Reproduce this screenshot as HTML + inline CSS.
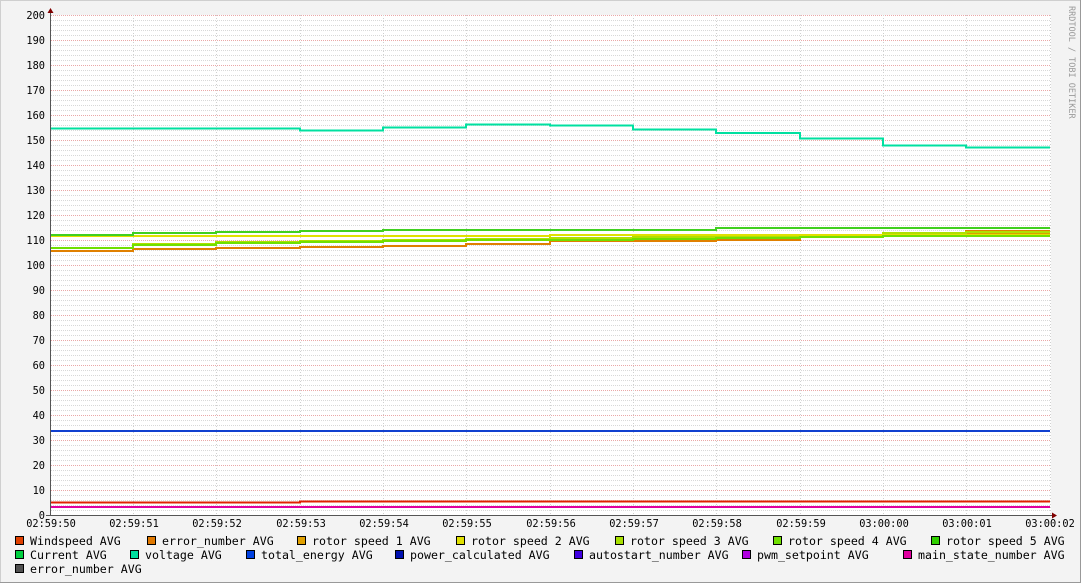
<!DOCTYPE html><html><head><style>body{margin:0;background:#f3f3f3}svg{display:block}text{font-family:"DejaVu Sans Mono","Liberation Mono",monospace}</style></head><body>
<svg width="1081" height="583" xmlns="http://www.w3.org/2000/svg">
<defs>
<pattern id="mn" x="51" y="15" width="2" height="5" patternUnits="userSpaceOnUse"><rect width="1" height="1" fill="#d8d8d8"/></pattern>
<pattern id="mj" x="51" y="15" width="2" height="25" patternUnits="userSpaceOnUse"><rect width="1" height="1" fill="#eaa8a8"/></pattern>
</defs>
<rect width="1081" height="583" fill="#f3f3f3"/>
<rect x="0.5" y="0.5" width="1080" height="582" fill="none" stroke="#cfcfcf"/>
<line x1="0" y1="582.5" x2="1081" y2="582.5" stroke="#999"/><line x1="1080.5" y1="0" x2="1080.5" y2="583" stroke="#999"/>
<rect x="51" y="15" width="1000" height="500" fill="#fff"/>
<rect x="51" y="15" width="1000" height="500" fill="url(#mn)"/>
<rect x="51" y="15" width="1000" height="500" fill="url(#mj)"/>
<g stroke="#d0d0d0" stroke-dasharray="1,2">
<line x1="133.5" y1="15" x2="133.5" y2="515"/><line x1="216.5" y1="15" x2="216.5" y2="515"/><line x1="300.5" y1="15" x2="300.5" y2="515"/><line x1="383.5" y1="15" x2="383.5" y2="515"/><line x1="466.5" y1="15" x2="466.5" y2="515"/><line x1="550.5" y1="15" x2="550.5" y2="515"/><line x1="633.5" y1="15" x2="633.5" y2="515"/><line x1="716.5" y1="15" x2="716.5" y2="515"/><line x1="800.5" y1="15" x2="800.5" y2="515"/><line x1="883.5" y1="15" x2="883.5" y2="515"/><line x1="966.5" y1="15" x2="966.5" y2="515"/><line x1="1050.5" y1="15" x2="1050.5" y2="515"/>
</g>
<g fill="none" stroke-width="2">
<path stroke="#00e0a0" d="M51 128.5H300V130.5H383V127.5H466V124.5H550V125.5H633V129.5H716V133H800V138.5H883V145.5H966V147.5H1050"/>
<path stroke="#d9a000" d="M51 251H133V249H216V248H300V247H383V246H466V244H550V241H633V240H716V239H800V236H883V234H966V233H1050"/>
<path stroke="#e08000" d="M51 251H133V249H216V248H300V247H383V246H466V244H550V241H633V241H716V240H800V236H883V234H966V231H1050"/>
<path stroke="#b0e000" d="M51 248H133V244H216V242H300V241H383V240H466V239H550V238H633V237H716V236H800V235H883V233H966V232H1050"/>
<path stroke="#e0e000" d="M51 236H550V235H1050"/>
<path stroke="#70e000" d="M51 248H133V245H216V243H300V242H383V241H466V240H550V240H633V239H716V238H800V237H883V236H966V236H1050"/>
<path stroke="#40d020" d="M51 235H133V233H216V232H300V231H383V230H716V228H1050"/>
<path stroke="#1040d0" d="M51 431H1050"/>
<path stroke="#e02000" d="M51 502.5H300V501.5H1050"/>
<path stroke="#e000a0" d="M51 507H1050"/>
</g>
<line x1="50.5" y1="10" x2="50.5" y2="516" stroke="#555"/>
<line x1="46" y1="515.5" x2="1054" y2="515.5" stroke="#555"/>
<path d="M47.5 13L50.5 8L53.5 13Z M1052 512.5L1057 515.5L1052 518.5Z" fill="#800000"/>
<g font-size="10.3" fill="#000" text-anchor="end">
<text x="45" y="519">0</text><text x="45" y="494">10</text><text x="45" y="469">20</text><text x="45" y="444">30</text><text x="45" y="419">40</text><text x="45" y="394">50</text><text x="45" y="369">60</text><text x="45" y="344">70</text><text x="45" y="319">80</text><text x="45" y="294">90</text><text x="45" y="269">100</text><text x="45" y="244">110</text><text x="45" y="219">120</text><text x="45" y="194">130</text><text x="45" y="169">140</text><text x="45" y="144">150</text><text x="45" y="119">160</text><text x="45" y="94">170</text><text x="45" y="69">180</text><text x="45" y="44">190</text><text x="45" y="19">200</text>
</g>
<g font-size="10.3" fill="#000" text-anchor="middle">
<text x="51" y="527">02:59:50</text><text x="134" y="527">02:59:51</text><text x="217" y="527">02:59:52</text><text x="301" y="527">02:59:53</text><text x="384" y="527">02:59:54</text><text x="467" y="527">02:59:55</text><text x="551" y="527">02:59:56</text><text x="634" y="527">02:59:57</text><text x="717" y="527">02:59:58</text><text x="801" y="527">02:59:59</text><text x="884" y="527">03:00:00</text><text x="967" y="527">03:00:01</text><text x="1050" y="527">03:00:02</text>
</g>
<text transform="translate(1069,6) rotate(90)" font-size="8.5" fill="#999">RRDTOOL / TOBI OETIKER</text>
<g font-size="11.6" fill="#000" stroke-width="1" stroke="#000">
<rect x="15.5" y="536.5" width="8" height="8" fill="#e04000"/><text stroke="none" x="30" y="545">Windspeed AVG</text>
<rect x="147.5" y="536.5" width="8" height="8" fill="#e07800"/><text stroke="none" x="162" y="545">error_number AVG</text>
<rect x="297.5" y="536.5" width="8" height="8" fill="#e0a000"/><text stroke="none" x="312" y="545">rotor speed 1 AVG</text>
<rect x="456.5" y="536.5" width="8" height="8" fill="#e0e000"/><text stroke="none" x="471" y="545">rotor speed 2 AVG</text>
<rect x="615.5" y="536.5" width="8" height="8" fill="#a8e000"/><text stroke="none" x="630" y="545">rotor speed 3 AVG</text>
<rect x="773.5" y="536.5" width="8" height="8" fill="#70e000"/><text stroke="none" x="788" y="545">rotor speed 4 AVG</text>
<rect x="931.5" y="536.5" width="8" height="8" fill="#30d000"/><text stroke="none" x="946" y="545">rotor speed 5 AVG</text>
<rect x="15.5" y="550.5" width="8" height="8" fill="#00d040"/><text stroke="none" x="30" y="559">Current AVG</text>
<rect x="130.5" y="550.5" width="8" height="8" fill="#00e0a0"/><text stroke="none" x="145" y="559">voltage AVG</text>
<rect x="246.5" y="550.5" width="8" height="8" fill="#0040e0"/><text stroke="none" x="261" y="559">total_energy AVG</text>
<rect x="395.5" y="550.5" width="8" height="8" fill="#0010b0"/><text stroke="none" x="410" y="559">power_calculated AVG</text>
<rect x="574.5" y="550.5" width="8" height="8" fill="#4000e0"/><text stroke="none" x="589" y="559">autostart_number AVG</text>
<rect x="742.5" y="550.5" width="8" height="8" fill="#b000e0"/><text stroke="none" x="757" y="559">pwm_setpoint AVG</text>
<rect x="903.5" y="550.5" width="8" height="8" fill="#e000a0"/><text stroke="none" x="918" y="559">main_state_number AVG</text>
<rect x="15.5" y="564.5" width="8" height="8" fill="#505050"/><text stroke="none" x="30" y="573">error_number AVG</text>
</g>
</svg>
</body></html>
